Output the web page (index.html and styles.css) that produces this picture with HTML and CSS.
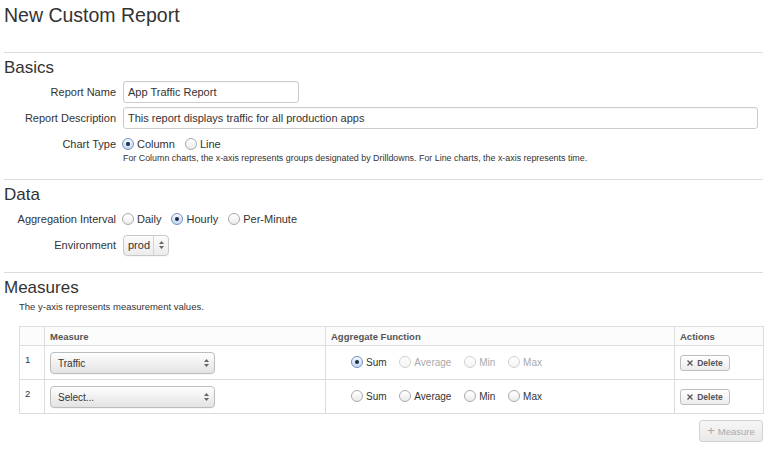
FILE: index.html
```html
<!DOCTYPE html>
<html>
<head>
<meta charset="utf-8">
<title>New Custom Report</title>
<link rel="stylesheet" href="styles.css">
</head>
<body>
<div class="page">
  <h1 class="title">New Custom Report</h1>

  <section class="section">
    <h2 class="heading">Basics</h2>
    <div class="row">
      <label class="lbl">Report Name</label>
      <input class="input input-name" type="text" value="App Traffic Report">
    </div>
    <div class="row">
      <label class="lbl">Report Description</label>
      <input class="input input-desc" type="text" value="This report displays traffic for all production apps">
    </div>
    <div class="row">
      <label class="lbl">Chart Type</label>
      <div class="radios">
        <span class="opt"><span class="radio checked"></span>Column</span>
        <span class="opt"><span class="radio"></span>Line</span>
      </div>
    </div>
    <p class="help">For Column charts, the x-axis represents groups designated by Drilldowns. For Line charts, the x-axis represents time.</p>
  </section>

  <section class="section">
    <h2 class="heading">Data</h2>
    <div class="row">
      <label class="lbl">Aggregation Interval</label>
      <div class="radios">
        <span class="opt"><span class="radio"></span>Daily</span>
        <span class="opt"><span class="radio checked"></span>Hourly</span>
        <span class="opt"><span class="radio"></span>Per-Minute</span>
      </div>
    </div>
    <div class="row">
      <label class="lbl">Environment</label>
      <div class="select sel-env">
        <span class="sel-text">prod</span>
        <span class="sel-arrows"><svg width="5" height="8" viewBox="0 0 5 8"><path d="M2.5 0 L5 3 H0Z M2.5 8 L0 5 H5Z" fill="#666"/></svg></span>
      </div>
    </div>
  </section>

  <section class="section last">
    <h2 class="heading">Measures</h2>
    <p class="sub">The y-axis represents measurement values.</p>
    <table class="measures">
      <colgroup>
        <col class="c-num"><col class="c-measure"><col class="c-agg"><col class="c-act">
      </colgroup>
      <thead>
        <tr><th></th><th>Measure</th><th>Aggregate Function</th><th>Actions</th></tr>
      </thead>
      <tbody>
        <tr>
          <td class="num">1</td>
          <td>
            <div class="select sel-measure">
              <span class="sel-text">Traffic</span>
              <span class="sel-arrows"><svg width="5" height="8" viewBox="0 0 5 8"><path d="M2.5 0 L5 3 H0Z M2.5 8 L0 5 H5Z" fill="#666"/></svg></span>
            </div>
          </td>
          <td class="agg">
            <span class="opt"><span class="radio checked"></span>Sum</span>
            <span class="opt disabled"><span class="radio"></span>Average</span>
            <span class="opt disabled"><span class="radio"></span>Min</span>
            <span class="opt disabled"><span class="radio"></span>Max</span>
          </td>
          <td class="act">
            <button class="btn-del"><svg width="6" height="6" viewBox="0 0 6 6"><path d="M0.5 0.5 L5.5 5.5 M5.5 0.5 L0.5 5.5" stroke="#555" stroke-width="1.3"/></svg>Delete</button>
          </td>
        </tr>
        <tr>
          <td class="num">2</td>
          <td>
            <div class="select sel-measure">
              <span class="sel-text">Select...</span>
              <span class="sel-arrows"><svg width="5" height="8" viewBox="0 0 5 8"><path d="M2.5 0 L5 3 H0Z M2.5 8 L0 5 H5Z" fill="#666"/></svg></span>
            </div>
          </td>
          <td class="agg">
            <span class="opt"><span class="radio"></span>Sum</span>
            <span class="opt"><span class="radio"></span>Average</span>
            <span class="opt"><span class="radio"></span>Min</span>
            <span class="opt"><span class="radio"></span>Max</span>
          </td>
          <td class="act">
            <button class="btn-del"><svg width="6" height="6" viewBox="0 0 6 6"><path d="M0.5 0.5 L5.5 5.5 M5.5 0.5 L0.5 5.5" stroke="#555" stroke-width="1.3"/></svg>Delete</button>
          </td>
        </tr>
      </tbody>
    </table>
    <div class="add-row">
      <button class="btn-add" disabled><span class="plus">+</span>Measure</button>
    </div>
  </section>
</div>
</body>
</html>
```

FILE: styles.css
```css
html, body {
  margin: 0;
  padding: 0;
  background: #fff;
}
body {
  font-family: "Liberation Sans", Arial, Helvetica, sans-serif;
  color: #333;
}
.page {
  padding: 0 9px 0 4px;
}
.title {
  margin: 4px 0 26px;
  font-size: 19.5px;
  line-height: 22px;
  font-weight: normal;
  color: #333;
}
.section {
  border-top: 1px solid #ddd;
  padding-bottom: 16px;
}
.section.last {
  padding-bottom: 0;
}
.heading {
  margin: 5px 0 3px;
  font-size: 17px;
  line-height: 20px;
  font-weight: normal;
  color: #333;
}
.row {
  display: flex;
  align-items: center;
  height: 22px;
}
.row + .row {
  margin-top: 4px;
}
.lbl {
  width: 112px;
  margin-right: 7px;
  text-align: right;
  font-size: 11px;
  color: #333;
  flex: none;
}
.input {
  box-sizing: border-box;
  height: 22px;
  margin: 0;
  padding: 0 4px;
  border: 1px solid #ccc;
  border-radius: 3px;
  font-family: "Liberation Sans", Arial, sans-serif;
  font-size: 11px;
  color: #333;
  background: #fff;
  outline: none;
  box-shadow: inset 0 1px 1px rgba(0,0,0,0.04);
}
.input-name { width: 176px; }
.input-desc { width: 635px; }

.radios {
  display: flex;
  align-items: center;
  margin-left: -1px;
}
.opt {
  display: inline-flex;
  align-items: center;
  font-size: 11px;
  color: #333;
  margin-right: 10px;
  white-space: nowrap;
}
.opt.disabled { color: #aaa; }
.radio {
  box-sizing: border-box;
  width: 12px;
  height: 12px;
  margin-right: 3px;
  border-radius: 50%;
  border: 1px solid #a9a9a9;
  background: linear-gradient(#ffffff, #ececec);
  box-shadow: inset 0 1px 1px #fff;
  position: relative;
  flex: none;
}
.opt.disabled .radio {
  border-color: #d0d0d0;
  background: linear-gradient(#ffffff, #f4f4f4);
}
.radio.checked {
  border-color: #6f8fbf;
  background: linear-gradient(#eef4ff, #c6d8f2);
}
.radio.checked::after {
  content: "";
  position: absolute;
  left: 3px;
  top: 3px;
  width: 4px;
  height: 4px;
  border-radius: 50%;
  background: #1c2a48;
}
.help {
  margin: -2px 0 0 119px;
  font-size: 8.9px;
  line-height: 10px;
  height: 10px;
  color: #333;
}

.select {
  box-sizing: border-box;
  display: flex;
  align-items: center;
  height: 22px;
  border: 1px solid #bcbcbc;
  border-radius: 4px;
  background: linear-gradient(#fefefe, #e3e3e3);
  box-shadow: inset 0 1px 0 #fff, 0 1px 0 rgba(0,0,0,0.03);
  color: #333;
}
.sel-text { flex: 1; }
.sel-arrows {
  display: flex;
  align-items: center;
  justify-content: center;
}
.sel-env {
  width: 46px;
  height: 21px;
  font-size: 11px;
  padding-left: 4px;
  background: linear-gradient(#fafafa, #ececec);
  border-color: #c8c8c8;
}
.sel-env .sel-arrows {
  width: 14px;
  height: 100%;
  border-left: 1px solid #d4d4d4;
}
.sel-measure {
  width: 165px;
  font-size: 10px;
  padding-left: 7px;
}
.sel-measure .sel-arrows {
  width: 12px;
  margin-right: 2px;
}

.sub {
  margin: 2px 0 13px 15px;
  font-size: 9.5px;
  line-height: 12px;
  color: #333;
}
.measures {
  margin-left: 15px;
  width: 744px;
  border-collapse: collapse;
  table-layout: fixed;
  border: 1px solid #ddd;
}
.c-num { width: 25px; }
.c-measure { width: 281px; }
.c-agg { width: 349px; }
.c-act { width: 89px; }
.measures th {
  height: 18px;
  padding: 0 5px;
  border: 1px solid #ddd;
  text-align: left;
  vertical-align: middle;
  font-size: 9.5px;
  font-weight: bold;
  color: #555;
  background: #fcfcfc;
}
.measures td {
  padding: 6px 5px 5px;
  border: 1px solid #ddd;
  vertical-align: middle;
  font-size: 10px;
}
.measures td.num {
  vertical-align: top;
  padding-top: 8px;
  line-height: 12px;
  font-size: 9.5px;
  color: #333;
}
.measures td.agg {
  padding-left: 25px;
}
.agg .opt { font-size: 10px; }

.btn-del {
  display: inline-flex;
  align-items: center;
  justify-content: center;
  gap: 4px;
  box-sizing: border-box;
  width: 50px;
  height: 16px;
  margin: 0;
  padding: 0;
  border: 1px solid #bdbdbd;
  border-radius: 3px;
  background: linear-gradient(#ffffff, #ececec);
  font-family: "Liberation Sans", Arial, sans-serif;
  font-size: 8.5px;
  font-weight: bold;
  color: #555;
}
.add-row {
  display: flex;
  justify-content: flex-end;
  margin-top: 6px;
}
.btn-add {
  box-sizing: border-box;
  width: 64px;
  height: 22px;
  margin: 0;
  padding: 0;
  border: 1px solid #d2d2d2;
  border-radius: 3px;
  background: linear-gradient(#f6f6f6, #e9e9e9);
  font-family: "Liberation Sans", Arial, sans-serif;
  font-size: 9.5px;
  color: #aaa;
  display: inline-flex;
  align-items: center;
  justify-content: center;
}
.plus {
  font-size: 13px;
  margin-right: 3px;
  line-height: 10px;
}
```
